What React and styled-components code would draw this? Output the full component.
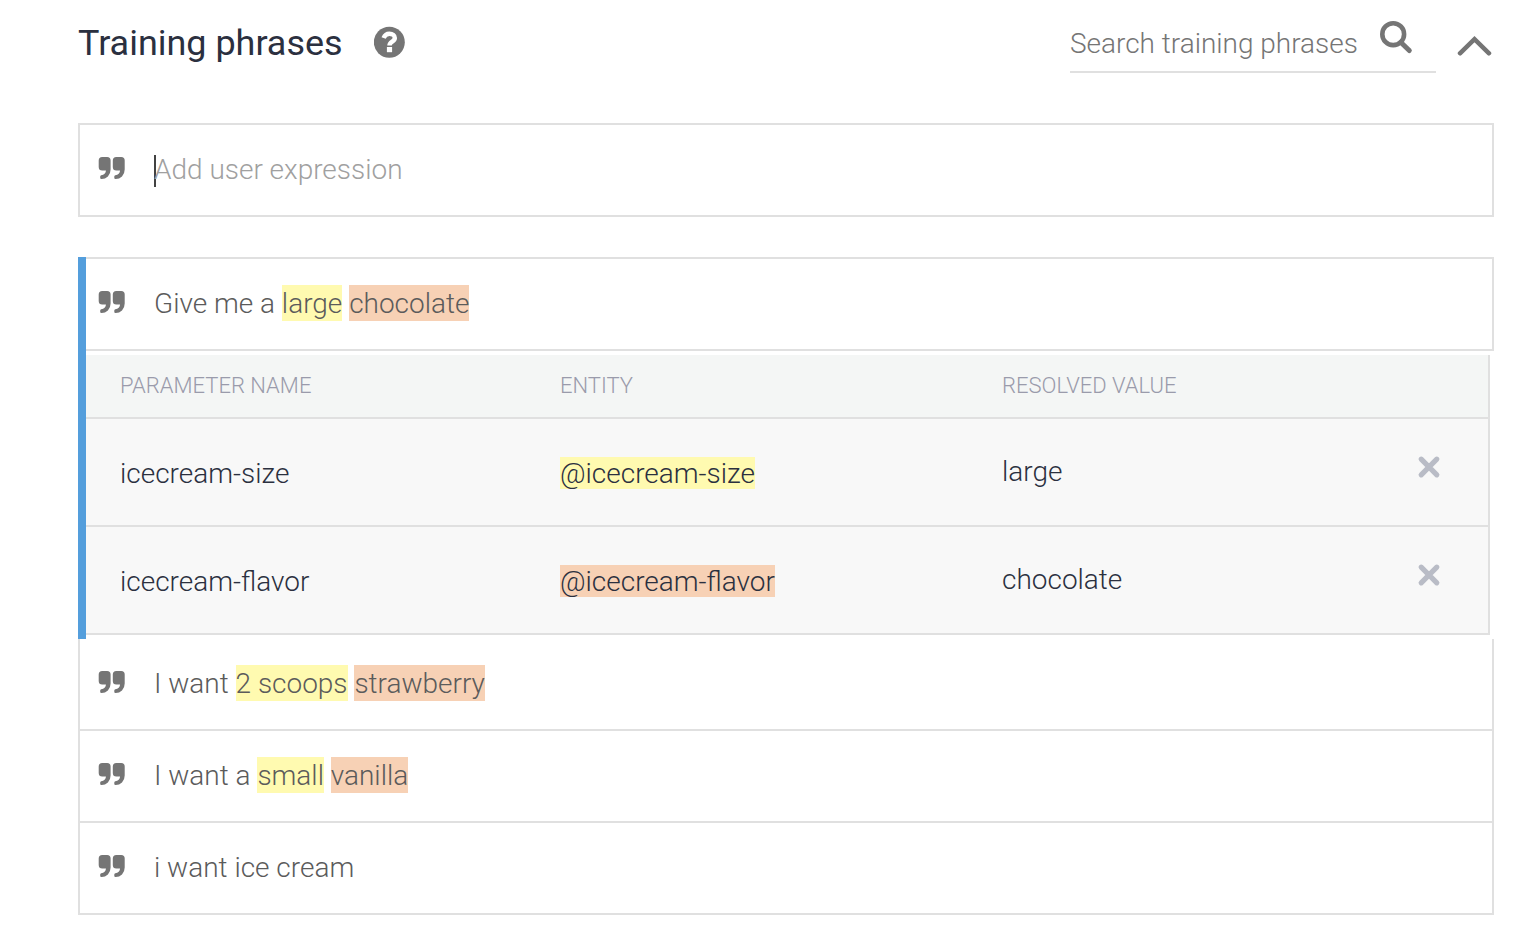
import React from "react";
import styled, { createGlobalStyle } from "styled-components";

const GlobalStyle = createGlobalStyle`
  * { box-sizing: border-box; }
  body {
    margin: 0;
    background: #fff;
    font-family: Roboto, "Liberation Sans", sans-serif;
    font-size: 27.97px;
    font-weight: 300;
    line-height: 36px;
    color: #5b5b5b;
  }
`;

const YELLOW = "#fffab0";
const PEACH = "#f7d1b5";
const LINE = "#e0e0e0";

const Page = styled.main`
  width: 1516px;
  height: 926px;
  padding: 0 22px 0 78px;
  overflow: hidden;
`;

const Header = styled.header`
  display: flex;
  align-items: flex-start;
  height: 123px;
`;

const Title = styled.h1`
  margin: 21px 0 0;
  width: 296px;
  font-size: 35.95px;
  font-weight: 400;
  line-height: 44px;
  color: #2b303f;
  white-space: nowrap;
`;

const HelpIcon = styled.svg`
  width: 32px;
  height: 32px;
  margin-top: 26px;
`;

const SearchField = styled.div`
  display: flex;
  justify-content: space-between;
  width: 366px;
  height: 73px;
  margin-left: auto;
  padding: 0 23px 0 0;
  border-bottom: 2px solid ${LINE};
`;

const SearchText = styled.span`
  margin-top: 26px;
  color: #757575;
  white-space: nowrap;
`;

const SearchIcon = styled.svg`
  width: 34px;
  height: 34px;
  margin-top: 21px;
`;

const Chevron = styled.svg`
  width: 36px;
  height: 22px;
  margin: 35px 2px 0 20px;
`;

const PhraseRow = styled.div`
  display: flex;
  align-items: flex-start;
  height: ${(p) => (p.$boxed ? 94 : 92)}px;
  padding-left: ${(p) => (p.$active ? 12 : 18)}px;
  border: solid ${LINE};
  border-width: ${(p) => (p.$boxed ? "2px" : "0 2px 2px")};
  ${(p) => p.$active && "border-left: 0;"}
`;

const QuoteIcon = styled.svg`
  flex: none;
  width: 28px;
  height: 23px;
  margin: 32px 28px 0 0;
`;

const PhraseText = styled.span`
  margin-top: 26px;
  padding-top: 1px;
  white-space: pre;
`;

const Placeholder = styled(PhraseText)`
  color: #a0a0a0;
`;

const Caret = styled.i`
  width: 2px;
  height: 32px;
  margin: 30px -2px 0 0;
  background: #424242;
`;

const Mark = styled.mark`
  display: inline-block;
  margin-top: -1px;
  padding-top: 2px;
  line-height: 34px;
  color: inherit;
  background: ${(p) => p.$color};
`;

const Selected = styled.section`
  height: 382px;
  margin-top: 40px;
  border-left: 8px solid #549edc;
`;

const Table = styled.div`
  width: 1404px;
  margin-top: 4px;
  border-right: 2px solid ${LINE};
`;

const TableRow = styled.div`
  display: grid;
  grid-template-columns: 440px 442px 415px auto;
  height: ${(p) => (p.$head ? 64 : 108)}px;
  padding-left: 34px;
  border-bottom: 2px solid ${LINE};
  background: ${(p) => (p.$head ? "#f4f6f5" : "#f8f8f8")};
`;

const HeadCell = styled.span`
  margin-top: 13px;
  font-size: 22px;
  color: #9a9bab;
`;

const Cell = styled.span`
  margin-top: ${(p) => (p.$raised ? 35 : 37)}px;
  color: #2b303f;
`;

const Entity = styled.mark`
  display: inline-block;
  height: 32px;
  padding-top: 1px;
  line-height: 32px;
  color: inherit;
  background: ${(p) => p.$color};
`;

const RemoveIcon = styled.svg`
  width: 24px;
  height: 24px;
  margin-top: 36px;
`;

const QUOTE_MARK =
  "M4.200 0H9.100Q12.600 0 12.600 3.500V12.500Q12.600 16.800 9.900 19.400T3.600 22H3.400Q2.200 22 2.200 20.900V19.500Q2.200 18.500 3.200 18.300Q7.600 17.600 7.900 14V13.400H4.200Q.700 13.400 .700 9.900V3.500Q.700 0 4.200 0Z";

const Quote = () => (
  <QuoteIcon viewBox="0 0 28 23" fill="#757575">
    <path d={QUOTE_MARK} />
    <path transform="translate(14.1 0)" d={QUOTE_MARK} />
  </QuoteIcon>
);

const Phrase = ({ parts, ...rest }) => (
  <PhraseRow {...rest}>
    <Quote />
    <PhraseText>
      {parts.map((p, i) =>
        typeof p === "string" ? p : <Mark key={i} $color={p.color}>{p.text}</Mark>
      )}
    </PhraseText>
  </PhraseRow>
);

const params = [
  { name: "icecream-size", color: YELLOW, value: "large" },
  { name: "icecream-flavor", color: PEACH, value: "chocolate" },
];

const phrases = [
  ["I want ", { text: "2 scoops", color: YELLOW }, " ", { text: "strawberry", color: PEACH }],
  ["I want a ", { text: "small", color: YELLOW }, " ", { text: "vanilla", color: PEACH }],
  ["i want ice cream"],
];

export default function App() {
  return (
    <Page>
      <GlobalStyle />
      <Header>
        <Title>Training phrases</Title>
        <HelpIcon viewBox="0 0 32 32">
          <circle cx="15.300" cy="16.200" r="15.500" fill="#757575" />
          <path d="M9.600 12C10.800 9 12.800 7.800 15.400 7.800c3.400 0 5.400 1.700 5.400 4.100 0 3.900-5.300 3.400-5.300 7.500" fill="none" stroke="#fff" strokeWidth="4.500" />
          <path d="M12.900 21h5.200v5.200h-5.200z" fill="#fff" />
        </HelpIcon>
        <SearchField>
          <SearchText>Search training phrases</SearchText>
          <SearchIcon viewBox="0 0 34 34" fill="none" stroke="#757575">
            <circle cx="14.200" cy="13.200" r="10.900" strokeWidth="4.600" />
            <path d="M22 21.500l8.300 8" strokeWidth="5" strokeLinecap="round" />
          </SearchIcon>
        </SearchField>
        <Chevron viewBox="0 0 36 22">
          <path d="M4 18.300L18.500 4.200 33 18.300" fill="none" stroke="#757575" strokeWidth="4.500" strokeLinecap="round" />
        </Chevron>
      </Header>

      <PhraseRow $boxed>
        <Quote />
        <Caret />
        <Placeholder>Add user expression</Placeholder>
      </PhraseRow>

      <Selected>
        <Phrase
          $boxed
          $active
          parts={["Give me a ", { text: "large", color: YELLOW }, " ", { text: "chocolate", color: PEACH }]}
        />
        <Table>
          <TableRow $head>
            <HeadCell>PARAMETER NAME</HeadCell>
            <HeadCell>ENTITY</HeadCell>
            <HeadCell>RESOLVED VALUE</HeadCell>
          </TableRow>
          {params.map((p) => (
            <TableRow key={p.name}>
              <Cell>{p.name}</Cell>
              <Cell>
                <Entity $color={p.color}>@{p.name}</Entity>
              </Cell>
              <Cell $raised>{p.value}</Cell>
              <RemoveIcon viewBox="0 0 24 24">
                <path d="M4.200 4.200l15.600 15.600M19.800 4.200L4.200 19.800" stroke="#b9bcc6" strokeWidth="5.200" strokeLinecap="round" />
              </RemoveIcon>
            </TableRow>
          ))}
        </Table>
      </Selected>
      {phrases.map((parts, i) => (
        <Phrase key={i} parts={parts} />
      ))}
    </Page>
  );
}
